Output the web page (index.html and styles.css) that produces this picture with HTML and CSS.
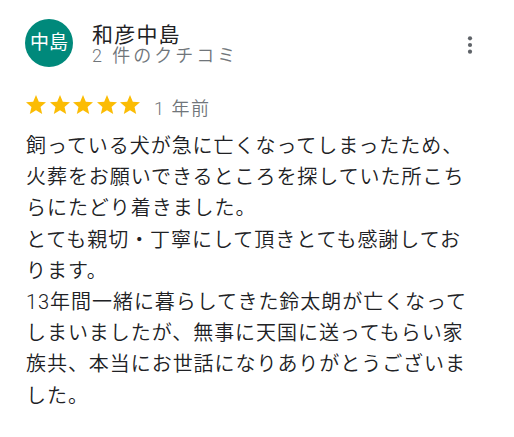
FILE: index.html
```html
<!DOCTYPE html>
<html lang="ja">
<head>
<meta charset="utf-8">
<link rel="stylesheet" href="styles.css">
</head>
<body>
<div class="review">
  <div class="header">
    <div class="avatar">中島</div>
    <div class="author">
      <div class="name">和彦中島</div>
      <div class="count">2 件のクチコミ</div>
    </div>
    <svg class="menu" width="24" height="24" viewBox="0 0 24 24" aria-hidden="true">
      <circle cx="12" cy="5.3" r="2.1"/>
      <circle cx="12" cy="12" r="2.1"/>
      <circle cx="12" cy="18.7" r="2.1"/>
    </svg>
  </div>
  <div class="rating">
    <div class="stars">
      <svg class="star" viewBox="0 0 24 24"><path d="M12 17.27L18.18 21l-1.64-7.03L22 9.24l-7.19-.61L12 2 9.19 8.63 2 9.24l5.46 4.73L5.82 21z"/></svg>
      <svg class="star" viewBox="0 0 24 24"><path d="M12 17.27L18.18 21l-1.64-7.03L22 9.24l-7.19-.61L12 2 9.19 8.63 2 9.24l5.46 4.73L5.82 21z"/></svg>
      <svg class="star" viewBox="0 0 24 24"><path d="M12 17.27L18.18 21l-1.64-7.03L22 9.24l-7.19-.61L12 2 9.19 8.63 2 9.24l5.46 4.73L5.82 21z"/></svg>
      <svg class="star" viewBox="0 0 24 24"><path d="M12 17.27L18.18 21l-1.64-7.03L22 9.24l-7.19-.61L12 2 9.19 8.63 2 9.24l5.46 4.73L5.82 21z"/></svg>
      <svg class="star" viewBox="0 0 24 24"><path d="M12 17.27L18.18 21l-1.64-7.03L22 9.24l-7.19-.61L12 2 9.19 8.63 2 9.24l5.46 4.73L5.82 21z"/></svg>
    </div>
    <span class="time">1 年前</span>
  </div>
  <p class="text">飼っている犬が急に亡くなってしまったため、火葬をお願いできるところを探していた所こちらにたどり着きました。<br>とても親切・丁寧にして頂きとても感謝しております。<br>13年間一緒に暮らしてきた鈴太朗が亡くなってしまいましたが、無事に天国に送ってもらい家族共、本当にお世話になりありがとうございました。</p>
</div>
</body>
</html>
```

FILE: styles.css
```css
html, body {
  margin: 0;
  padding: 0;
  background: #ffffff;
}

body {
  font-family: Roboto, "Noto Sans CJK JP", sans-serif;
  color: #202124;
}

.review {
  padding: 19px 32px 0 25px;
}

.header {
  display: flex;
  align-items: flex-start;
}

.avatar {
  flex: none;
  width: 48px;
  height: 48px;
  border-radius: 50%;
  background: #00897b;
  color: #ffffff;
  font-size: 19px;
  line-height: 48px;
  text-align: center;
}

.author {
  margin-left: 19px;
  padding-top: 6px;
}

.name {
  font-size: 21px;
  line-height: 21px;
  letter-spacing: 1.2px;
  font-weight: 400;
  color: #202124;
}

.count {
  font-size: 18px;
  line-height: 20px;
  letter-spacing: 3px;
  font-weight: 350;
  color: #70757a;
}

.menu {
  margin-left: auto;
  margin-top: 14px;
  fill: #5f6368;
}

.rating {
  display: flex;
  align-items: flex-start;
  margin-top: 26px;
  margin-left: -1px;
}

.stars {
  display: flex;
}

.star {
  width: 24px;
  height: 24px;
  margin-right: -0.4px;
  fill: #fbbc04;
}

.time {
  margin-left: 12px;
  padding-top: 4px;
  font-size: 18px;
  line-height: 24px;
  letter-spacing: 1.5px;
  font-weight: 350;
  color: #70757a;
}

.text {
  width: 455px;
  margin: 10px 0 0 1px;
  font-size: 20px;
  line-height: 31.2px;
  letter-spacing: 0.95px;
  font-weight: 350;
  color: #202124;
}
```
